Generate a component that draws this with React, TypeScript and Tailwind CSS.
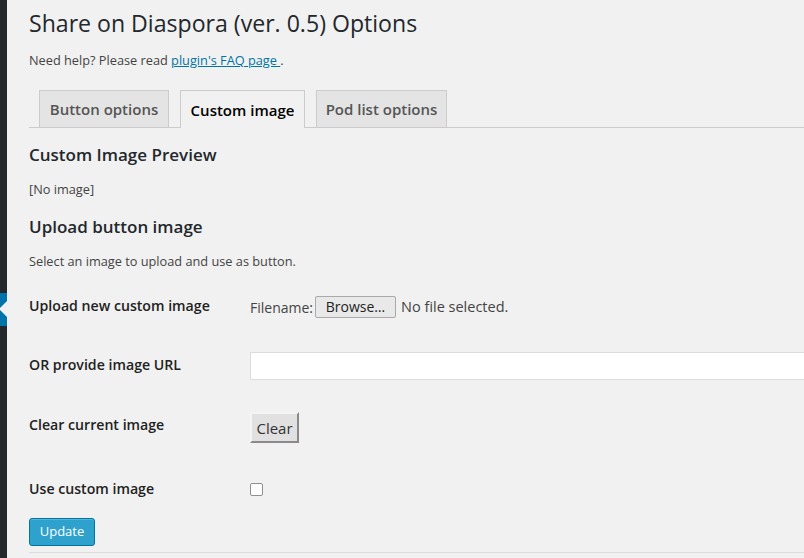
import React from "react";

const font = { fontFamily: '"Open Sans", "Liberation Sans", sans-serif' };

const Tab: React.FC<{ label: string; active?: boolean; width: string }> = ({ label, active, width }) => (
  <div
    className={
      active
        ? `${width} h-[38px] -mb-px border border-b-0 border-[#ccc] bg-[#f1f1f1] text-[#000] flex items-center justify-center text-[15px] font-semibold leading-[24px]`
        : `${width} h-[37px] border border-b-0 border-[#ccc] bg-[#e4e4e4] text-[#555] flex items-center justify-center text-[15px] font-semibold leading-[24px]`
    }
  >
    {label}
  </div>
);

export default function App() {
  return (
    <div className="flex w-[804px] h-[558px] overflow-hidden bg-[#f1f1f1]" style={font}>
      {/* admin menu edge */}
      <div className="w-[7px] shrink-0 bg-[#23282d] flex flex-col">
        <div className="relative mt-[293px] h-[33px] bg-[#0073aa]">
          <div className="absolute right-0 top-[8px] w-0 h-0 border-y-[8px] border-y-transparent border-r-[8px] border-r-[#f1f1f1]" />
        </div>
      </div>

      <div className="flex-1 min-w-0 pl-[22px] flex flex-col">
        <h2 className="mt-[9px] h-[29px] leading-[29px] text-[23.1px] font-normal text-[#23282d]">
          Share on Diaspora (ver. 0.5) Options
        </h2>
        <p className="mt-[13px] h-[18px] leading-[18px] text-[12.75px] text-[#444]">
          Need help? Please read{" "}
          <a href="#" className="text-[#0074a2] underline">
            plugin's FAQ page{" "}
          </a>
          .
        </p>

        <div className="mt-[21px] flex items-end gap-[11px] pl-[10px] border-b border-[#ccc]">
          <Tab label="Button options" width="w-[130px]" />
          <Tab label="Custom image" width="w-[125px]" active />
          <Tab label="Pod list options" width="w-[131px]" />
        </div>

        <h3 className="mt-[15px] h-[24px] leading-[24px] text-[17px] font-semibold text-[#23282d]">
          Custom Image Preview
        </h3>
        <p className="mt-[13px] h-[18px] leading-[18px] text-[12.75px] text-[#444]">[No image]</p>
        <h3 className="mt-[17px] h-[24px] leading-[24px] text-[17px] font-semibold text-[#23282d]">
          Upload button image
        </h3>
        <p className="mt-[13px] h-[18px] leading-[18px] text-[12.75px] text-[#444]">
          Select an image to upload and use as button.
        </p>

        <div className="mt-[6px] flex flex-col text-[14.15px]">
          <div className="flex h-[59px]">
            <div className="w-[221px] shrink-0 pt-[20px] leading-[20px] font-semibold text-[#222]">
              Upload new custom image
            </div>
            <div className="pt-[15px] h-[47px] flex items-center text-[#444] text-[14.5px]">
              <span className="text-[14px]">Filename:</span>
              <button className="ml-[2px] w-[81px] h-[22px] border border-[#a9a9a9] rounded-[2px] bg-[#e9e9e9] text-[#222] text-[14px] leading-[20px]">
                Browse…
              </button>
              <span className="ml-[5px]">No file selected.</span>
            </div>
          </div>

          <div className="flex h-[60px]">
            <div className="w-[221px] shrink-0 pt-[20px] leading-[20px] font-semibold text-[#222]">
              OR provide image URL
            </div>
            <div className="pt-[17px]">
              <div className="w-[600px] h-[28px] bg-white border border-[#ddd]" />
            </div>
          </div>

          <div className="flex h-[64px]">
            <div className="w-[221px] shrink-0 pt-[20px] leading-[20px] font-semibold text-[#222]">
              Clear current image
            </div>
            <div className="pt-[17px]">
              <button className="w-[49px] h-[31px] bg-[#e1e1e1] border-2 border-t-[#f4f4f4] border-l-[#f4f4f4] border-b-[#8a8a8a] border-r-[#8a8a8a] text-[15px] text-[#333] leading-[20px]">
                Clear
              </button>
            </div>
          </div>

          <div className="flex h-[52px]">
            <div className="w-[221px] shrink-0 pt-[20px] leading-[20px] font-semibold text-[#222]">
              Use custom image
            </div>
            <div className="pt-[24px]">
              <div className="w-[13px] h-[13px] bg-white border border-[#8f8f8f] rounded-[2px]" />
            </div>
          </div>
        </div>

        <div className="mt-[7px]">
          <button className="w-[66px] h-[28px] bg-[#2ea2cc] border border-[#0074a2] rounded-[3px] text-white text-[13px] shadow-[inset_0_1px_0_rgba(120,200,230,0.5)]">
            Update
          </button>
        </div>
        <div className="mt-[6px] border-t border-[#ddd]" />
      </div>
    </div>
  );
}
